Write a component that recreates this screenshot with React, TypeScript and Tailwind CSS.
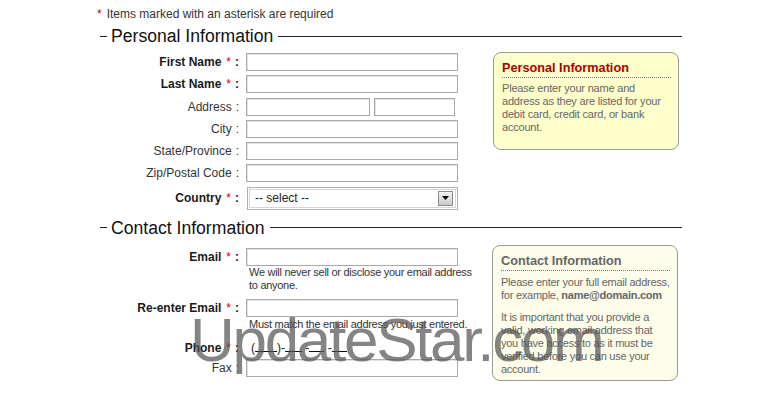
import React from "react";

const Req = () => <span className="text-[#cc0000] ml-[5px]">*</span>;

const Label: React.FC<{ text: string; required?: boolean }> = ({ text, required }) => (
  <div className="w-[144px] shrink-0 text-right whitespace-nowrap pr-[2px]">
    <span className={required ? "font-bold text-[#1a1a1a]" : "text-[#333]"}>{text}</span>
    {required && <Req />}
    <span className={required ? "font-bold text-[#1a1a1a] ml-[4px]" : "text-[#333] ml-[4px]"}>:</span>
  </div>
);

const Input: React.FC<{ w?: string }> = ({ w = "w-[212px]" }) => (
  <div className={`${w} h-[18px] border border-[#a9a9a9] bg-white shadow-[inset_1px_1px_0_#e4e4e4]`} />
);

const Row: React.FC<{ label: string; required?: boolean; children: React.ReactNode }> = ({ label, required, children }) => (
  <div className="flex items-center">
    <Label text={label} required={required} />
    <div className="ml-[5px] flex items-center">{children}</div>
  </div>
);

const Legend: React.FC<{ title: string; className?: string }> = ({ title, className }) => (
  <div className={`flex items-center h-[20px] ${className ?? ""}`}>
    <div className="ml-[3px] w-[7px] h-px bg-[#222]" />
    <div className="ml-[4px] text-[17.6px] leading-[20px] text-[#111] whitespace-nowrap">{title}</div>
    <div className="ml-[5px] flex-1 h-px bg-[#222]" />
  </div>
);

const Blank: React.FC<{ w: string }> = ({ w }) => <span className={`inline-block ${w} h-[12px] border-b border-[#111] align-baseline`} />;

export default function App() {
  return (
    <div
      className="relative w-[780px] h-[395px] overflow-hidden bg-white text-[12px] leading-[14px] text-[#333]"
      style={{ fontFamily: '"Liberation Sans", Arial, sans-serif' }}
    >
      <div className="w-[585px] ml-[97px] pt-[7px]">
        <div className="leading-[14px]">
          <span className="text-[#cc0000]">*</span>
          <span className="ml-[5px] text-[#333]">Items marked with an asterisk are required</span>
        </div>

        <Legend title="Personal Information" className="mt-[5px]" />

        <div className="flex items-start mt-[7px]">
          <div className="flex flex-col gap-[4.3px] w-[361px]">
            <Row label="First Name" required>
              <Input />
            </Row>
            <Row label="Last Name" required>
              <Input />
            </Row>
            <Row label="Address">
              <Input w="w-[124px]" />
              <div className="ml-[4px]">
                <Input w="w-[81px]" />
              </div>
            </Row>
            <Row label="City">
              <Input />
            </Row>
            <Row label="State/Province">
              <Input />
            </Row>
            <Row label="Zip/Postal Code">
              <Input />
            </Row>
            <Row label="Country" required>
              <div className="w-[211px] h-[23px] ml-px border border-[#b0b0b0] p-px bg-white">
                <div className="h-full border border-[#d6d6d6] flex items-center justify-between pl-[5px] pr-[2px]">
                  <span className="text-[#222] text-[12px]">-- select --</span>
                  <div className="w-[15px] h-[15px] border border-[#8a8a8a] bg-gradient-to-b from-[#f4f4f4] to-[#c9c9c9] flex items-center justify-center">
                    <svg width="7" height="4" viewBox="0 0 7 4">
                      <path d="M0 0 H7 L3.5 4 Z" fill="#000" />
                    </svg>
                  </div>
                </div>
              </div>
            </Row>
          </div>

          <div className="ml-[35px] -mt-px w-[186px] h-[98px] rounded-[8px] border border-[#9a9a9a] bg-[#ffffcc] pt-[7px] pl-[8px] pr-[7px] text-[11px] leading-[13px] tracking-[-0.2px]">
            <div className="text-[12.7px] leading-[16px] tracking-normal font-bold text-[#aa0000] border-b border-dotted border-[#777] pb-px">
              Personal Information
            </div>
            <div className="mt-[4px] text-[#666] whitespace-nowrap">
              Please enter your name and<br />
              address as they are listed for your<br />
              debit card, credit card, or bank<br />
              account.
            </div>
          </div>
        </div>

        <Legend title="Contact Information" className="mt-[8px]" />

        <div className="flex items-start mt-[10px]">
          <div className="flex flex-col w-[361px]">
            <Row label="Email" required>
              <Input />
            </Row>
            <div className="ml-[152px] mt-[0.5px] text-[11px] leading-[13px] tracking-[-0.28px] text-[#333] whitespace-nowrap">
              We will never sell or disclose your email address<br />
              to anyone.
            </div>
            <div className="mt-[7px]">
              <Row label="Re-enter Email" required>
                <Input />
              </Row>
            </div>
            <div className="ml-[152px] mt-[0.5px] text-[11px] leading-[13px] tracking-[-0.28px] text-[#333] whitespace-nowrap">
              Must match the email address you just entered.
            </div>
            <div className="mt-[8px] h-[18px] flex items-center">
              <Label text="Phone" required />
              <div className="ml-[10px] text-[12px] text-[#222] whitespace-nowrap">
                (<Blank w="w-[22px]" />)-<Blank w="w-[17px]" /> -<Blank w="w-[15px]" /> -<Blank w="w-[15px]" />
              </div>
            </div>
            <div className="mt-[2px]">
              <Row label="Fax">
                <Input />
              </Row>
            </div>
          </div>

          <div className="ml-[34px] -mt-[3px] w-[186px] h-[136px] rounded-[8px] border border-[#9a9a9a] bg-[#fdfdea] pt-[7px] pl-[8px] pr-[7px] text-[11px] leading-[13px] tracking-[-0.25px]">
            <div className="text-[12.7px] leading-[16px] tracking-normal font-bold text-[#666] border-b border-dotted border-[#777] pb-px">
              Contact Information
            </div>
            <div className="mt-[5px] text-[#666] whitespace-nowrap">
              Please enter your full email address,<br />
              for example, <span className="font-bold">name@domain.com</span>
            </div>
            <div className="mt-[9px] text-[#666] whitespace-nowrap">
              It is important that you provide a<br />
              valid, working email address that<br />
              you have access to as it must be<br />
              verified before you can use your<br />
              account.
            </div>
          </div>
        </div>
      </div>

      <div
        className="absolute left-[190px] top-[309px] text-[62px] leading-[62px] tracking-[-2.3px] text-[rgba(85,85,85,0.72)] whitespace-nowrap pointer-events-none select-none"
        style={{ fontFamily: '"Liberation Sans", Arial, sans-serif' }}
      >
        UpdateStar.com
      </div>
    </div>
  );
}
